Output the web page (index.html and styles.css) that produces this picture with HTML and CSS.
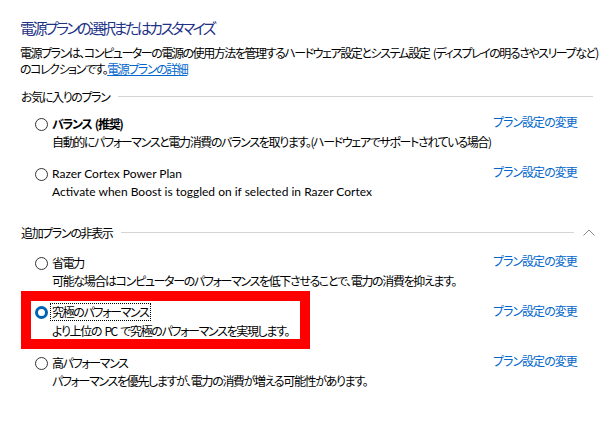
FILE: index.html
```html
<!DOCTYPE html>
<html lang="ja">
<head>
<meta charset="utf-8">
<link rel="stylesheet" href="styles.css">
</head>
<body>
<main class="page">
  <h1 class="title">電源プランの選択またはカスタマイズ</h1>
  <p class="intro">電源プランは、コンピューターの電源の使用方法を管理するハードウェア設定とシステム設定 (ディスプレイの明るさやスリープなど)<br>のコレクションです。<a class="link" href="#">電源プランの詳細</a></p>

  <div class="group-head"><span>お気に入りのプラン</span><span class="rule"></span></div>
  <div class="plans">
    <div class="plan">
      <div class="plan-main">
        <div class="plan-label"><span class="radio"></span><span class="name bold">バランス (推奨)</span></div>
        <div class="plan-desc">自動的にパフォーマンスと電力消費のバランスを取ります。(ハードウェアでサポートされている場合)</div>
      </div>
      <a class="link plan-link" href="#">プラン設定の変更</a>
    </div>
    <div class="plan">
      <div class="plan-main">
        <div class="plan-label"><span class="radio"></span><span class="name latin">Razer Cortex Power Plan</span></div>
        <div class="plan-desc latin">Activate when Boost is toggled on if selected in Razer Cortex</div>
      </div>
      <a class="link plan-link" href="#">プラン設定の変更</a>
    </div>
  </div>

  <div class="group-head group-head-2"><span>追加プランの非表示</span><span class="rule"></span>
    <svg class="chevron" width="12" height="7" viewBox="0 0 12 7"><path d="M0.5 6.5 L6 1 L11.5 6.5" fill="none" stroke="#8a8a8a" stroke-width="1"/></svg>
  </div>
  <div class="plans plans-2">
    <div class="plan">
      <div class="plan-main">
        <div class="plan-label"><span class="radio"></span><span class="name">省電力</span></div>
        <div class="plan-desc">可能な場合はコンピューターのパフォーマンスを低下させることで、電力の消費を抑えます。</div>
      </div>
      <a class="link plan-link" href="#">プラン設定の変更</a>
    </div>
    <div class="plan marked">
      <div class="plan-main">
        <div class="plan-label"><span class="radio checked"></span><span class="name focus">究極のパフォーマンス</span></div>
        <div class="plan-desc">より上位の PC で究極のパフォーマンスを実現します。</div>
      </div>
      <a class="link plan-link" href="#">プラン設定の変更</a>
    </div>
    <div class="plan">
      <div class="plan-main">
        <div class="plan-label"><span class="radio"></span><span class="name">高パフォーマンス</span></div>
        <div class="plan-desc">パフォーマンスを優先しますが、電力の消費が増える可能性があります。</div>
      </div>
      <a class="link plan-link" href="#">プラン設定の変更</a>
    </div>
  </div>
</main>
</body>
</html>
```
FILE: styles.css
```css
html, body {
  margin: 0;
  padding: 0;
  background: #ffffff;
}
body {
  font-family: "Noto Sans CJK JP", "Noto Sans", sans-serif;
  font-size: 12px;
  color: #000000;
  font-feature-settings: "palt";
  letter-spacing: -1.35px;
  word-spacing: 2px;
}
.page {
  padding: 18px 22px 0 20px;
}
.title {
  margin: 0;
  font-size: 15px;
  line-height: 20px;
  font-weight: 400;
  color: #1e3287;
  letter-spacing: -2.6px;
}
.intro {
  margin: 7px 0 0 0;
  line-height: 16px;
  white-space: nowrap;
  letter-spacing: -1.45px;
}
.link {
  color: #0066cc;
  text-decoration: none;
}
.intro .link {
  text-decoration: underline;
}
.group-head {
  display: flex;
  align-items: center;
  margin-top: 11px;
  line-height: 17px;
  padding-left: 1px;
}
.group-head-2 {
  margin-top: 24px;
  margin-right: -2px;
}
.rule {
  flex: 1;
  height: 1px;
  background: #d5d5d5;
  margin-left: 8px;
}
.chevron {
  margin-left: 9px;
  display: block;
}
.plans {
  display: flex;
  flex-direction: column;
  gap: 15px;
  margin-top: 10px;
  padding-left: 15px;
}
.plans-2 {
  margin-top: 13px;
}
.plan {
  display: grid;
  grid-template-columns: minmax(0, 1fr) 100px;
  position: relative;
}
.plan-label {
  display: flex;
  align-items: center;
  gap: 4px;
  line-height: 18px;
}
.name.bold {
  font-weight: 700;
}
.name.focus {
  outline: 1px dotted #000;
  outline-offset: 0;
  line-height: 16px;
  padding: 0 1px;
  margin-left: -1px;
}
.plan-desc {
  padding-left: 17px;
  line-height: 17px;
  white-space: nowrap;
}
.marked .plan-desc {
  margin-top: 2px;
}
.latin {
  font-family: Lato, "Noto Sans", sans-serif;
  letter-spacing: 0;
  word-spacing: 0;
}
.plan-link {
  line-height: 14px;
  align-self: start;
  letter-spacing: -1px;
}
.radio {
  width: 13px;
  height: 13px;
  box-sizing: border-box;
  border: 1px solid #333333;
  border-radius: 50%;
  background: #ffffff;
  flex: none;
}
.radio.checked {
  border: 3.5px solid #0063b1;
  background: #ffffff;
}
.marked::after {
  content: "";
  position: absolute;
  left: -14px;
  top: -13px;
  width: 289px;
  height: 58px;
  box-sizing: border-box;
  border: 10px solid #ff0000;
  pointer-events: none;
}
```
